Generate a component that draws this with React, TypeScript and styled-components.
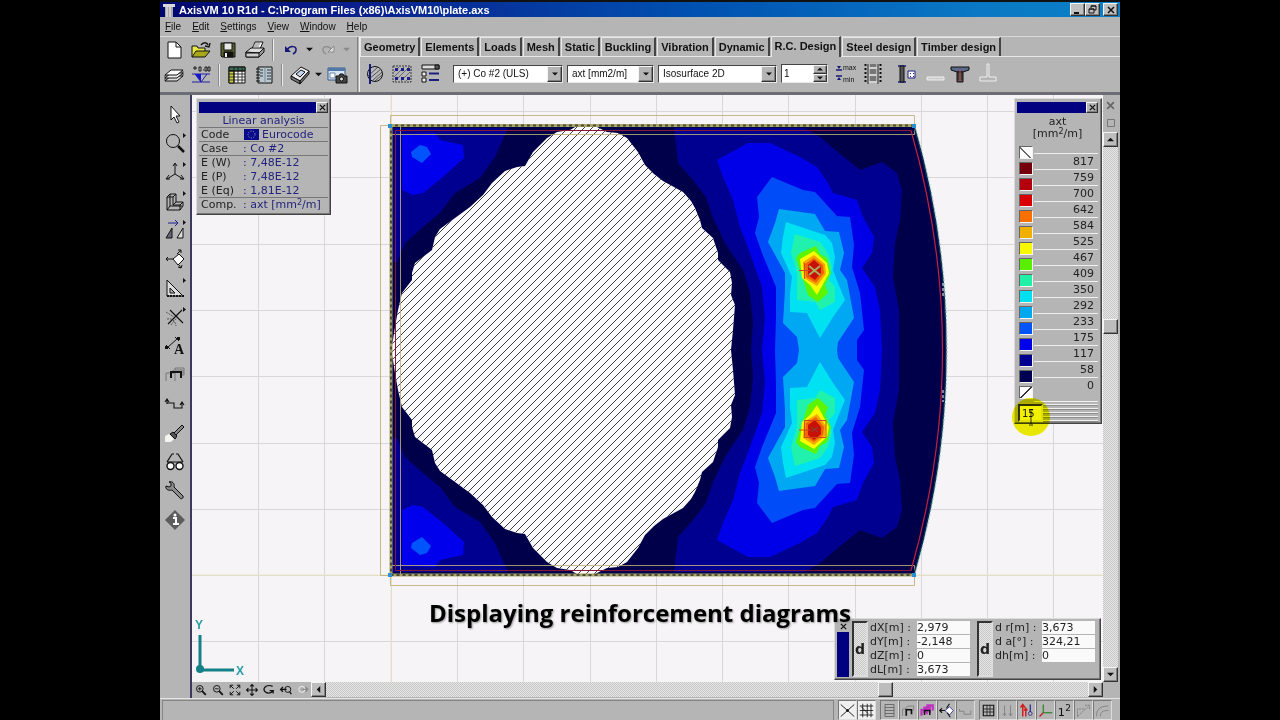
import React from 'react';
import styled, { createGlobalStyle, css } from 'styled-components';

const GREY = '#b5b5b5';
const NAVY = '#000080';
const UI = '"Liberation Sans", Arial, sans-serif';
const WIDE = '"DejaVu Sans", Verdana, sans-serif';

const Global = createGlobalStyle`
  * { box-sizing: border-box; }
  body { margin: 0; background: #000; font-family: ${UI}; font-size: 10px; color: #111; }
  button, input, select { font: inherit; color: inherit; margin: 0; padding: 0; border: 0; border-radius: 0; background: none; }
  svg { display: block; }
`;

const raised = css`
  border: 1px solid;
  border-color: #f4f4f4 #333 #333 #f4f4f4;
  box-shadow: inset -1px -1px 0 #808080;
`;
const sunken = css`
  border: 1px solid;
  border-color: #555 #f0f0f0 #f0f0f0 #555;
`;

const Stage = styled.div`
  display: flex;
  min-height: 100vh;
  padding: 0 12.5%;
  background: #000;
`;
const Shell = styled.div`
  position: relative;
  display: flex;
  flex-direction: column;
  flex: 1;
  min-width: 0;
  background: ${GREY};
`;

/* ---------- title bar and menu ---------- */
const TitleBar = styled.header`
  display: flex;
  align-items: center;
  height: 17px;
  padding: 0 2px 0 3px;
  border-top: 2px solid #111;
  background: linear-gradient(90deg, #00086e 0%, #0a1f8c 20%, #0050b0 55%, #0a78c4 85%, #0a80c8 100%);
  color: #fff;
`;
const Title = styled.h1`
  flex: 1;
  margin: 0 0 0 4px;
  font-size: 11px;
  line-height: 14px;
  font-weight: bold;
  white-space: nowrap;
`;
const CaptionButton = styled.button<{ $apart?: boolean }>`
  display: grid;
  place-items: center;
  width: 15px;
  height: 13px;
  margin-left: ${p => (p.$apart ? 3 : 0)}px;
  background: #c0c0c0;
  ${raised}
`;
const MenuBar = styled.nav`
  display: flex;
  gap: 11px;
  height: 20px;
  padding: 0 5px;
  align-items: center;
  border-bottom: 1px solid #d8d8d8;
`;
const MenuItem = styled.button`
  line-height: 16px;
  &::first-letter { text-decoration: underline; }
`;

/* ---------- toolbars ---------- */
const Toolbars = styled.div`
  display: flex;
  height: 58px;
  border-bottom: 3px solid #6c6c74;
`;
const ToolGroup = styled.div`
  padding: 0 6px 0 0;
  border-right: 1px solid #808080;
`;
const ToolRow = styled.div`
  display: flex;
  align-items: center;
  height: 25px;
`;
const ToolButton = styled.button<{ $w?: number }>`
  display: grid;
  place-items: center;
  flex: none;
  width: ${p => p.$w ?? 27}px;
  height: 25px;
`;
const Separator = styled.span`
  width: 2px;
  height: 22px;
  margin: 0 3px 0 4px;
  border-left: 1px solid #8a8a8a;
  border-right: 1px solid #ececec;
`;
const Ribbon = styled.div`
  display: flex;
  flex-direction: column;
  flex: 1;
  min-width: 0;
  margin-left: 1px;
  border-left: 1px solid #eee;
`;
const TabRow = styled.div`
  display: flex;
  gap: 1px;
  align-items: flex-end;
  height: 20px;
  border-bottom: 1px solid #e8e8e8;
`;
const Tab = styled.button<{ $on?: boolean }>`
  height: ${p => (p.$on ? 21 : 19)}px;
  padding: 0 3px ${p => (p.$on ? 3 : 0)}px;
  border-style: solid;
  border-width: 1px 2px 0 1px;
  border-color: #e8e8e8 #444 #e8e8e8 #e8e8e8;
  margin-bottom: ${p => (p.$on ? -1 : 0)}px;
  background: ${GREY};
  font-size: 11px;
  line-height: 16px;
  font-weight: bold;
  white-space: nowrap;
`;
const ControlRow = styled.div`
  display: flex;
  align-items: center;
  height: 33px;
`;
const ViewTools = styled.div`
  display: flex;
  margin-right: 9px;
`;
const Combo = styled.label<{ $w: number }>`
  display: flex;
  width: ${p => p.$w}px;
  height: 18px;
  margin-right: 4px;
  background: #fff;
  border: 1px solid;
  border-color: #444 #e8e8e8 #e8e8e8 #444;
`;
const ComboSelect = styled.select`
  flex: 1;
  min-width: 0;
  padding-left: 4px;
  appearance: none;
  outline: none;
`;
const ComboArrow = styled.span`
  display: grid;
  place-items: center;
  width: 15px;
  background: ${GREY};
  pointer-events: none;
  ${raised}
`;
const Spinner = styled.div`
  display: flex;
  width: 47px;
  height: 19px;
  margin-right: 6px;
  background: #fff;
  border: 1px solid;
  border-color: #444 #e8e8e8 #e8e8e8 #444;
`;
const SpinnerInput = styled.input`
  width: 31px;
  padding-left: 2px;
`;
const SpinnerButtons = styled.div`
  display: grid;
  grid-template-rows: 1fr 1fr;
  width: 14px;
`;
const SpinButton = styled.button`
  display: grid;
  place-items: center;
  background: ${GREY};
  ${raised}
`;

/* ---------- work area ---------- */
const Main = styled.main`
  display: flex;
  flex: 1;
  min-height: 0;
`;
const SideBar = styled.aside`
  display: flex;
  flex-direction: column;
  align-items: center;
  width: 32px;
  padding: 4px 0 0;
  border-right: 2px solid #3a3a5c;
`;
const SideButton = styled.button`
  display: grid;
  place-items: center;
  width: 28px;
  height: 29px;
`;
const Center = styled.section`
  display: flex;
  flex-direction: column;
  flex: 1;
  min-width: 0;
`;
const Canvas = styled.div`
  position: relative;
  flex: 1;
  min-height: 500px;
  background: #f6f4f6;
  overflow: hidden;
`;
const Plot = styled.svg`
  position: absolute;
  inset: 0;
  width: 100%;
  height: 100%;
`;
const AxisMark = styled.svg`
  position: absolute;
  left: 0;
  bottom: 0;
`;
const track = css`
  background: repeating-conic-gradient(#e6e6e6 0 25%, #c6c6c6 0 50%) 0 0 / 2px 2px;
`;
const ScrollButton = styled.button`
  display: grid;
  place-items: center;
  flex: none;
  width: 15px;
  height: 15px;
  background: #bdbdbd;
  ${raised}
`;
const BottomBar = styled.div`
  display: flex;
  height: 16px;
  padding-bottom: 1px;
`;
const ZoomButton = styled.button`
  display: grid;
  place-items: center;
  flex: none;
  width: 17px;
  height: 15px;
`;
const Track = styled.div<{ $dir: 'row' | 'column' }>`
  display: flex;
  flex: 1;
  flex-direction: ${p => p.$dir};
  ${track}
`;
const Spacer = styled.span<{ $grow: number }>`
  flex: ${p => p.$grow} 1 0;
`;
const RightBar = styled.div`
  display: flex;
  flex-direction: column;
  width: 17px;
  padding: 1px 2px 16px 0;
`;
const PinButton = styled.button`
  display: grid;
  place-items: center;
  width: 15px;
  height: 18px;
`;

/* ---------- floating panels ---------- */
const panel = css`
  position: absolute;
  background: ${GREY};
  border: 1px solid;
  border-color: #dcdcdc #444 #444 #dcdcdc;
  box-shadow: inset -1px -1px 0 #777;
  font-family: ${WIDE};
  font-size: 11px;
  color: #222;
`;
const PanelBar = styled.div`
  display: flex;
  justify-content: flex-end;
  height: 11px;
  background: ${NAVY};
`;
const PanelClose = styled.button`
  display: grid;
  place-items: center;
  width: 12px;
  height: 11px;
  background: ${GREY};
  ${raised}
`;
const InfoPanel = styled.section`
  ${panel}
  left: 4px;
  top: 3px;
  width: 135px;
  padding: 3px 2px 2px;
`;
const InfoTable = styled.table`
  width: 100%;
  margin-top: 1px;
  border-collapse: collapse;
  table-layout: fixed;
  caption { color: #24247c; height: 13px; line-height: 13px; }
`;
const InfoRow = styled.tr<{ $rule?: boolean }>`
  height: 14px;
  line-height: 13px;
  border-top: ${p => (p.$rule ? '1px solid #777' : '0')};
  th { width: 44px; padding: 0 0 0 2px; font-weight: normal; text-align: left; white-space: nowrap; }
  td { padding: 0; color: #24247c; white-space: nowrap; }
`;
const Flag = styled.svg`
  display: inline-block;
  vertical-align: top;
  margin: 1px 3px 0 1px;
`;
const Sup = styled.sup`
  font-size: 8px;
  line-height: 0;
  vertical-align: 3px;
`;
const LegendPanel = styled.section`
  ${panel}
  right: 1px;
  top: 3px;
  width: 88px;
  padding: 3px 3px 1px 2px;
`;
const LegendTitle = styled.h2`
  display: flex;
  flex-direction: column;
  margin: 3px 0 6px;
  font-size: 11px;
  line-height: 12px;
  font-weight: normal;
  text-align: center;
`;
const LegendBody = styled.div`
  display: flex;
`;
const SwatchList = styled.div`
  display: flex;
  flex-direction: column;
  padding-left: 2px;
  width: 17px;
`;
const Swatch = styled.span<{ $c: string }>`
  width: 14px;
  height: 13px;
  margin-bottom: 3px;
  border: 1px solid;
  border-color: #666 #f4f4f4 #f4f4f4 #666;
  background: ${p => p.$c};
`;
const ValueList = styled.ol`
  flex: 1;
  margin: 7px 0 0;
  padding: 0;
  list-style: none;
  border-bottom: 1px solid #f0f0f0;
`;
const Value = styled.li`
  height: 16px;
  padding-right: 4px;
  border-top: 1px solid #f0f0f0;
  line-height: 15px;
  text-align: right;
`;
const LegendFoot = styled.div`
  display: flex;
  height: 18px;
  margin-top: 2px;
  padding-left: 1px;
`;
const CountInput = styled.input`
  width: 25px;
  height: 18px;
  padding-left: 2px;
  font-size: 10px;
  background: #fff;
  border: 2px solid;
  border-color: #333 #eee #eee #333;
`;
const Stripes = styled.span`
  flex: 1;
  background: repeating-linear-gradient(#f0f0f0 0 1px, #8c8c8c 1px 2px, ${GREY} 2px 4px);
`;
const ClickHalo = styled.svg`
  position: absolute;
  left: -4px;
  bottom: -14px;
  pointer-events: none;
  mix-blend-mode: multiply;
`;
const CoordPanel = styled.section`
  ${panel}
  right: 2px;
  bottom: 2px;
  display: flex;
  width: 267px;
  height: 62px;
  padding: 2px 3px 2px 2px;
`;
const CoordGrip = styled.div`
  display: flex;
  flex-direction: column;
  flex: none;
  width: 12px;
  margin-right: 3px;
`;
const GripClose = styled.button`
  display: grid;
  place-items: center;
  height: 11px;
`;
const GripBar = styled.span`
  flex: 1;
  background: ${NAVY};
`;
const DeltaButton = styled.button`
  flex: none;
  width: 16px;
  margin-right: 2px;
  font-size: 14px;
  font-weight: bold;
  ${track}
  border: 2px solid;
  border-color: #333 #ddd #ddd #333;
`;
const CoordGrid = styled.div`
  display: grid;
  flex: none;
  grid-template-columns: 47px 53px;
  grid-auto-rows: 14px;
  margin-right: 7px;
  &:last-child { margin-right: 0; }
`;
const CoordLabel = styled.label`
  line-height: 14px;
  white-space: pre;
`;
const CoordInput = styled.input`
  width: 53px;
  height: 13px;
  background: #fafafa;
`;
const Caption = styled.p`
  position: absolute;
  left: 0;
  right: 0;
  bottom: 92px;
  margin: 0;
  font-family: "Open Sans", "Noto Sans", sans-serif;
  font-size: 24px;
  line-height: 30px;
  font-weight: bold;
  text-align: center;
  color: #000;
  text-shadow: 1px 1px 2px #999;
  pointer-events: none;
`;

/* ---------- status bar ---------- */
const StatusBar = styled.footer`
  display: flex;
  height: 22px;
  padding: 1px 8px 0 2px;
  border-top: 1px solid #e4e4e4;
`;
const StatusText = styled.div`
  flex: 1;
  border: 1px solid #858585;
  border-bottom: 0;
`;
const StatusGroup = styled.div`
  display: flex;
  margin-left: 4px;
`;
const StatusButton = styled.button<{ $on?: boolean }>`
  display: grid;
  place-items: center;
  width: 19px;
  height: 20px;
  ${sunken}
  border-color: #777 #ddd #ddd #777;
  background: ${p => (p.$on ? '#f0f0f0' : GREY)};
`;

/* ---------- icons ---------- */
type IconProps = { size?: number; children: React.ReactNode };
const Icon = ({ size = 20, children }: IconProps) => (
  <svg width={size} height={size} viewBox="0 0 20 20" fill="none" stroke="#111" strokeWidth="1" overflow="visible" aria-hidden="true">
    {children}
  </svg>
);
const Caret = ({ dir = 'down', color = '#111', w = 7 }: { dir?: string; color?: string; w?: number }) => {
  const d: Record<string, string> = {
    down: 'M0 2h8L4 6z', up: 'M0 6h8L4 2z', left: 'M6 0v8L2 4z', right: 'M2 0v8l4-4z',
  };
  return <svg width={w} height={w} viewBox="0 0 8 8" aria-hidden="true"><path d={d[dir]} fill={color} /></svg>;
};
const Cross = ({ s = 8, c = '#111' }: { s?: number; c?: string }) => (
  <svg width={s} height={s} viewBox="0 0 8 8" aria-hidden="true"><path d="M1 1l6 6M7 1L1 7" stroke={c} strokeWidth="1.5" /></svg>
);
const Flyout = <path d="M18 0v5l3-2.5z" fill="#111" stroke="none" />;

const tool: Record<string, React.ReactNode> = {
  New: <><path d="M4 2h8l5 5v11H4z" fill="#fff" /><path d="M12 2v5h5" /></>,
  Open: <><path d="M1 17V6h5l1 2h7v3" fill="#e8e84a" /><path d="M1 17l4-6h14l-5 6z" fill="#a8a818" /><path d="M10 5c2-3 6-3 7 0M14 6l4 1 1-4" strokeWidth="1.4" /></>,
  Save: <><path d="M3 3h14v14H4l-1-1z" fill="#56602c" /><path d="M6 3h8v7H6z" fill="#e8e8e8" /><path d="M6 12h9v5H6z" fill="#111" /><path d="M7 13h2v4H7z" fill="#eee" stroke="none" /></>,
  Print: <><path d="M7 9l3-7h8l-3 7z" fill="#fff" /><path d="M1 12l5-4h13l-4 5H1z" fill="#ddd" /><path d="M1 12v5h13l5-5V8l-5 5z" fill="#999" /><path d="M1 13h13v4H1z" fill="#ccc" /><path d="M9 4h6M8 6h6" stroke="#777" /></>,
  Undo: <><path d="M6 10c3-5 10-4 9 0 0 2-1 3-3 4" stroke="#18187a" strokeWidth="1.5" /><path d="M4 6v6h6z" fill="#18187a" stroke="none" /></>,
  Redo: <><path d="M14 10c-3-5-10-4-9 0 0 2 1 3 3 4" stroke="#8c8c8c" strokeWidth="1.3" /><path d="M16 6v6h-6z" fill="#ddd" stroke="#8c8c8c" /></>,
  Layers: <><path d="M1 16l6-5h12l-6 5z" fill="#ddd" /><path d="M1 13l6-5h12l-6 5z" fill="#eee" /><path d="M1 10l6-5h12l-6 5z" fill="#fff" /><path d="M1 10v6M19 6v5" strokeWidth=".7" /></>,
  Level: <><path d="M1 9h18M4 9l6 8 6-8M1 17h18" stroke="#2020a0" /><path d="M10 9v8L4 9z" fill="#1414d0" stroke="none" /><path d="M2 3h4M4 1v4M8 2h2v4H8zM12 5h1M14 2h2v4h-2zM17 2h2v4h-2z" strokeWidth=".9" /></>,
  Table: <><path d="M2 2h16v16H2z" fill="#fff" /><path d="M2 2h16v4H2z" fill="#3c6c54" /><path d="M2 6h5v12H2z" fill="#c8d040" /><path d="M2 6h16M2 9h16M2 12h16M2 15h16M7 2v16M11 2v16M15 2v16" strokeWidth=".8" /></>,
  Report: <><path d="M4 2h14v16H4z" fill="#b8c8cc" /><path d="M11 2v16" stroke="#789" /><path d="M6 5h3M6 8h3M6 11h3M13 5h4M13 8h4M13 11h4M13 14h4" stroke="#334" /><path d="M2 4h4M2 7h4M2 10h4M2 13h4M2 16h4" /></>,
  Snapshot: <><path d="M1 11L11 2l8 4-9 10z" fill="#eee" /><path d="M1 11v3l9 5v-3zM10 16v3l9-10V6z" fill="#777" /><path d="M6 9l5-4 4 2-5 5z" fill="#c4d4ec" /></>,
  Gallery: <><path d="M1 3h17v12H1z" fill="#d8e4f0" stroke="#345a8a" /><path d="M1 3h17v3H1z" fill="#5078a8" stroke="none" /><path d="M3 8h5v5H3z" fill="#fff" stroke="#345a8a" strokeWidth=".7" /><path d="M9 11h3l1-2h3l1 2h3v7H9z" fill="#444" /><circle cx="14.500" cy="14" r="2" fill="#ddd" /></>,
};
const control: Record<string, React.ReactNode> = {
  Section: <><circle cx="11" cy="10" r="7.500" fill="#bcbcbc" /><path d="M4 12l10-9M5 15L17 5M8 17l10-9M11 17l7-6" stroke="#444" strokeWidth=".9" /><path d="M6 0v20" stroke="#18187a" strokeWidth="2" /></>,
  Rebar: <><path d="M1 2h18v16H1z" stroke="#333" strokeDasharray="2 1" /><path d="M2 8l5-5M2 13L12 3M3 17L17 3M9 17l9-9M14 17l4-4" stroke="#555" strokeWidth=".8" /><path d="M3 4h3v3H3zM9 4h3v3H9zM15 4h3v3h-3zM3 13h3v3H3zM9 13h3v3H9zM15 13h3v3h-3z" fill="#1c1c90" stroke="none" /></>,
  Options: <><path d="M2 1h17v4H2z" fill="#ddd" /><path d="M15 1h4v4h-4z" fill="#555" /><path d="M2 8h4v4H2zM2 14h4v4H2z" fill="#eee" /><path d="M9 9.500h10M9 16h10" stroke="#1c1c80" strokeWidth="2" /></>,
};

const column: [string, React.ReactNode][] = [
  ['Select', <path d="M6 2v14l3-3 3 6 2-1-3-6h4z" fill="#fff" />],
  ['Zoom', <><circle cx="8" cy="8" r="6.500" /><path d="M13 13l6 6" strokeWidth="2.500" />{Flyout}</>],
  ['Views', <><path d="M10 12V2M10 12l-8 5M10 12l8 5M8 4l2-3 2 3M4 13l-3 4h4M16 13l3 4h-4" />{Flyout}</>],
  ['Work plane', <><path d="M2 6l3-3h6v8h7v4l-3 4H2z" /><path d="M2 6h6v8h7v5M8 6l3-3M8 14l3-3M15 14l3-3M5 3v12l-3 4M5 15h12" />{Flyout}</>],
  ['Transform', <><path d="M3 3h10M10 0l3 3-3 3" stroke="#1c1c90" /><path d="M1 18h6V8z" fill="#667" /><path d="M12 18h6V8z" fill="#ddd" />{Flyout}</>],
  ['Planes', <><path d="M8 10l6-5 5 5-6 6z" fill="#fff" /><path d="M8 10H1M3 8l-2 2 2 2M12 5l4-4M14 16l2 3M13 1h3v3M17 16l-1 3-3-1" /></>],
  ['Guidelines', <><path d="M2 2v16h16z" fill="#ddd" /><path d="M5 10v5h5z" fill={GREY} /><path d="M2 18h17" strokeDasharray="2 1" strokeWidth="2" />{Flyout}</>],
  ['Intersect', <><path d="M5 3l13 13M17 3L3 17" strokeWidth="1.200" /><path d="M1 5l8 5M6 18l7-9M2 12c6-1 8 2 9 7" stroke="#555" strokeDasharray="2 1" />{Flyout}</>],
  ['Dimension', <><path d="M2 12L13 2M1 9l4 4M10 1l4 4" /><path d="M12 1h3v3h-3zM0 10h3v3H0z" fill="#111" stroke="none" /><text x="9" y="18" fontFamily="Liberation Serif, serif" fontSize="14" fontWeight="bold" fill="#111" stroke="none">A</text></>],
  ['Copy', <><path d="M1 16V8h9v8M5 8l4-3h9v6M10 5V3h9v7" stroke="#777" /><path d="M6 13V7h10v6" strokeWidth="2" /></>],
  ['Path', <path d="M2 10V6M0 8l2-3 2 3M2 9h7v5h8V9M15 11l2-3 2 3" strokeWidth="1.100" />],
  ['Brush', <><path d="M8 11l9-9 2 2-9 9z" fill="#888" /><path d="M5 11l5 5 2-3-4-4z" fill="#555" /><path d="M0 13l4-2 5 5-3 3H0z" fill="#f4f4f0" stroke="none" /></>],
  ['Display', <><path d="M2 10L7 2h2M18 10l-5-8h-2M2 10h16" strokeWidth="1.200" /><circle cx="5.500" cy="14" r="3.500" fill="#fff" strokeWidth="1.400" /><circle cx="14.500" cy="14" r="3.500" fill="#fff" strokeWidth="1.400" /></>],
  ['Service', <path d="M1 5l3 1 2-1V2L4 1c3-1 6 1 5 5l9 9c1 2-2 4-3 2L7 9C3 10 0 8 1 5z" fill="#8c8c8c" />],
  ['Information', <><path d="M10 0l10 10-10 10L0 10z" fill="#5c5c5c" stroke="none" /><path d="M8 8h3v6M8 14h6" stroke="#fff" strokeWidth="2" /><circle cx="10" cy="5" r="1.500" fill="#fff" stroke="none" /></>],
];

const design: [string, number, React.ReactNode][] = [
  ['Film strip', 30, <><path d="M2.500 0v20M17.500 0v20" strokeDasharray="2 2" strokeWidth="2" /><path d="M5 0v20M15 0v20" strokeWidth=".8" /><path d="M7 5h6v5H7zM7 12h6v5H7zM7 0h6v3H7z" fill="#777" stroke="none" /><path d="M6 4h8M6 11h8M6 18h8" stroke="#eee" /></>],
  ['Column check', 38, <><path d="M1 2h8M1 18h8" stroke="#1c1c80" strokeWidth="1.500" /><path d="M3 2h4v16H3z" fill="#555" /><path d="M11 7h7v7h-7z" fill="#fff" stroke="#1c1c80" /><path d="M13 9h1v1h-1zM16 9h1v1h-1zM13 12h1v1h-1zM16 12h1v1h-1z" fill="#1c1c80" stroke="none" /></>],
  ['Slab', 20, <path d="M1 13h17v3H1z" fill="#ccc" stroke="#eee" />],
  ['Punching', 28, <><path d="M1 3h18v3l-6 2H7L1 6z" fill="#5a6a8a" /><path d="M7 8h6v10H7z" fill="#555" /><path d="M10 5v12" stroke="#c04040" /><path d="M8 8v8M12 8v8" stroke="#222" /></>],
  ['Footing', 28, <path d="M9 0h2v13h7v4H2v-4h7z" fill={GREY} stroke="#eee" />],
];

const zoomTools: [string, React.ReactNode][] = [
  ['Zoom in', <><circle cx="8" cy="8" r="5.500" strokeWidth="1.600" /><path d="M12 12l6 6" strokeWidth="3" /><path d="M5 8h6M8 5v6" strokeWidth="1.500" /></>],
  ['Zoom out', <><circle cx="8" cy="8" r="5.500" strokeWidth="1.600" /><path d="M12 12l6 6" strokeWidth="3" /><path d="M5 8h6" strokeWidth="1.500" /></>],
  ['Zoom to fit', <path d="M8 8L2 2M2 7V2h5M12 8l6-6M13 2h5v5M8 12l-6 6M2 13v5h5M12 12l6 6M18 13v5h-5" strokeWidth="1.600" />],
  ['Pan', <path d="M10 1v18M1 10h18M7 4l3-3 3 3M7 16l3 3 3-3M4 7l-3 3 3 3M16 7l3 3-3 3" strokeWidth="1.800" />],
  ['Rotate', <path d="M16 4C8 0 0 5 2 11c3 6 12 5 15 0h-6M17 11v5" strokeWidth="2" />],
  ['Previous view', <><circle cx="13" cy="9" r="5" strokeWidth="1.600" /><path d="M16 13l3 4M1 9h10M5 5L1 9l4 4" strokeWidth="2.200" /></>],
  ['Next view', <><circle cx="8" cy="9" r="5" stroke="#eee" strokeWidth="1.600" /><path d="M8 9h10M14 5l4 4-4 4" stroke="#888" strokeWidth="2" /></>],
];

const statusGroups: [string, React.ReactNode, boolean?][][] = [
  [
    ['Cursor snap', <path d="M1 2l18 16M19 2L1 18M8 10h4M10 8v4" strokeWidth="1.200" />, true],
    ['Grid snap', <path d="M5 1v18M11 1v18M16 1v18M1 4h18M1 10h18M1 16h18M3 5l9 9" strokeWidth="1.100" />, true],
  ],
  [
    ['Table', <path d="M4 2h12v16H4zM4 6h12M4 10h12M4 14h12" stroke="#555" />],
    ['Copy', <><path d="M2 17V8h8M6 7l3-3h8v6" stroke="#777" /><path d="M7 17V9h7v6" strokeWidth="2.200" /></>],
    ['Parts', <><path d="M2 17V9h7v6M6 13V6h7v7M10 9V3h7v7" stroke="#c030c0" strokeWidth="3" /><path d="M6 16v-6h7v6" strokeWidth="2" /></>],
    ['Planes', <><path d="M8 10l6-5 5 5-5 6z" fill="#fff" stroke="#1c1c90" /><path d="M1 10h7M4 7l-3 3 3 3M10 7l4-6M11 13l4 6" strokeWidth="1.500" /></>],
    ['Path', <path d="M2 8v3h6v4h9v-5" stroke="#777" />],
  ],
  [
    ['Grid', <><path d="M3 3h14v14H3z" strokeWidth="1.500" /><path d="M3 8h14M3 12h14M8 3v14M12 3v14" /></>],
    ['Loads', <path d="M6 3v14M4 14l2 3 2-3M14 3v14M12 14l2 3 2-3" stroke="#777" />],
    ['Symbols', <><path d="M5 18V3M2 6l3-4 3 4M9 18V8M7 10l2-3 2 3" stroke="#d02020" strokeWidth="2" /><path d="M15 2v10" stroke="#1c1c90" strokeWidth="1.500" /><circle cx="15" cy="14" r="2.500" stroke="#1c1c90" /></>],
    ['Local axes', <><path d="M7 13V2" stroke="#208020" strokeWidth="1.500" /><path d="M7 13l-5 5" stroke="#c02020" strokeWidth="2" /><path d="M7 13h12" stroke="#208020" strokeWidth="1.500" /></>],
    ['Numbering', <><text x="1" y="17" fontSize="15" fontFamily={WIDE} fill="#111" stroke="none">1</text><text x="11" y="11" fontSize="12" fontFamily={WIDE} fill="#111" stroke="none">2</text></>],
    ['Guide', <path d="M2 18V8h10M2 18L18 3M12 3h6v6" stroke="#777" strokeDasharray="3 1" />],
    ['Arc', <path d="M2 18c0-9 4-14 16-14M7 18c0-6 3-8 11-8" stroke="#777" />],
  ],
];

/* ---------- result plot ---------- */
type Pt = [number, number];
const AXIS_SUM = 700;
const flip = (pts: Pt[]): Pt[] => pts.map(([x, y]): Pt => [x, AXIS_SUM - y]);
const str = (pts: Pt[]) => pts.map(p => p.join(',')).join(' ');
const whole = (pts: Pt[]) => str([...pts, ...flip(pts).reverse()]);

/* Upper halves of the bands that cross the axis of symmetry. */
const bands: [string, Pt[]][] = [
  ['#000090', [[751, 350], [753, 323], [750, 293], [743, 270], [725, 243], [713, 218], [706, 197], [693, 180], [678, 163], [674, 128], [805, 128], [820, 137], [833, 148], [860, 170], [871, 166], [882, 162], [897, 173], [902, 190], [900, 220], [895, 243], [893, 277], [899, 310], [899, 350]]],
  ['#0000e8', [[762, 350], [765, 317], [762, 287], [750, 253], [740, 227], [733, 200], [723, 177], [717, 160], [748, 143], [770, 143], [800, 157], [817, 167], [828, 183], [833, 193], [857, 200], [863, 217], [874, 237], [872, 253], [862, 268], [875, 287], [880, 310], [882, 350]]],
  ['#004cf8', [[775, 350], [776, 317], [776, 287], [762, 253], [755, 233], [759, 217], [757, 197], [772, 177], [803, 190], [815, 192], [837, 216], [850, 217], [854, 245], [852, 267], [860, 293], [864, 330], [857, 340], [857, 350]]],
  ['#00a8f4', [[799, 350], [797, 337], [783, 323], [785, 290], [785, 273], [768, 242], [775, 223], [779, 209], [815, 214], [825, 231], [839, 232], [844, 253], [840, 270], [847, 280], [854, 318], [838, 342], [837, 350]]],
];
/* Closed spots around the two supports and in the corners; each has a twin below the axis. */
const islands: [string, Pt[]][] = [
  ['#000090', [[393, 128], [508, 128], [495, 157], [480, 178], [455, 193], [440, 213], [423, 227], [405, 243], [397, 262], [393, 262]]],
  ['#0000ec', [[402, 134], [435, 133], [440, 140], [463, 145], [464, 158], [443, 177], [423, 193], [413, 195], [402, 190]]],
  ['#0054fc', [[411, 152], [420, 145], [427, 147], [431, 154], [422, 163], [412, 157]]],
  ['#00e2f2', [[786, 222], [825, 235], [832, 243], [835, 257], [833, 270], [838, 283], [845, 300], [833, 317], [820, 338], [812, 323], [807, 313], [790, 312], [790, 293], [792, 277], [781, 253], [783, 237]]],
  ['#20f2ae', [[795, 234], [820, 242], [828, 253], [832, 267], [829, 280], [835, 287], [835, 302], [820, 310], [815, 302], [797, 300], [797, 273], [791, 253]]],
  ['#5cf400', [[816, 246], [820, 254], [827, 258], [831, 273], [825, 285], [828, 293], [818, 302], [808, 295], [803, 279], [796, 258], [800, 253]]],
  ['#fafa00', [[814, 251], [827, 263], [829, 273], [822, 286], [817, 295], [810, 285], [802, 278], [800, 259]]],
  ['#f4a800', [[814, 255], [825, 264], [826, 274], [817, 286], [804, 278], [803, 262]]],
  ['#f06400', [[814, 258], [823, 265], [824, 273], [816, 283], [806, 277], [805, 264]]],
  ['#c81008', [[814, 260], [821, 266], [821, 273], [815, 280], [808, 275], [808, 265]]],
];
const unreinforced: Pt[] = [
  [391, 350], [393, 340], [395, 327], [398, 310], [402, 293], [412, 280], [412, 273], [415, 263], [432, 250], [435, 237], [440, 229], [455, 218], [470, 207], [483, 195], [492, 183], [505, 171], [517, 167], [525, 166], [533, 152], [547, 138], [557, 132], [570, 130], [577, 126], [595, 126], [607, 132], [618, 133], [627, 138], [638, 152], [645, 165], [654, 174], [663, 181], [683, 192], [691, 201], [695, 208], [700, 220], [702, 228], [713, 238], [718, 253], [718, 260], [730, 272], [732, 283], [731, 295], [735, 305], [733, 330], [731, 350],
];
const gridX = [258, 324, 391, 457, 523, 590, 656, 722, 788, 855, 921, 987, 1053];
const gridY = [111, 177, 244, 310, 376, 443, 509, 575, 641];

const ResultPlot = () => (
  <Plot viewBox="192 95 911 587" preserveAspectRatio="xMidYMid slice" role="img" aria-label="Top reinforcement isosurfaces">
    <defs>
      <pattern id="hatch" width="8" height="8" patternUnits="userSpaceOnUse">
        <path d="M-1 9L9 -1M-1 1L1 -1M7 9L9 7" stroke="#2c2c2c" strokeWidth="0.900" />
      </pattern>
    </defs>
    <g stroke="#d8d8da" shapeRendering="crispEdges">
      {gridX.map(x => <line key={x} x1={x} x2={x} y1="95" y2="682" />)}
      {gridY.map(y => <line key={y} x1="192" x2="1103" y1={y} y2={y} />)}
    </g>
    <path d="M391 95V682M192 575H1103" stroke="#eae6c0" />
    <path d="M391 126H914A800 800 0 0 1 914 574H391Z" fill="#00004a" />
    {islands.slice(0, 3).map(([c, p], i) => (
      <g key={i} fill={c}><polygon points={str(p)} /><polygon points={str(flip(p))} /></g>
    ))}
    {bands.map(([c, p], i) => <polygon key={i} points={whole(p)} fill={c} />)}
    {islands.slice(3).map(([c, p], i) => (
      <g key={i} fill={c}><polygon points={str(p)} /><polygon points={str(flip(p))} /></g>
    ))}
    <polygon points={whole(unreinforced)} fill="#fafafc" />
    <polygon points={whole(unreinforced)} fill="url(#hatch)" />
    <g fill="none">
      <path d="M390.500 115.500H914.500V134.500H390.500ZM390.500 565.500H914.500V585.500H390.500ZM380.500 125.500H400.500V575.500H380.500Z" stroke="#bfae78" strokeWidth="1" opacity=".85" />
      <path d="M911 130.500H395.500V570.500H911" stroke="#8c1838" />
      <path d="M911 130.500Q974 350 911 570.500" stroke="#c02438" strokeWidth="1.200" />
      <path d="M914 125.500H391V575H914" stroke="#a8a468" strokeWidth="3" />
      <path d="M914 125.500H391V575H914" stroke="#4c4c38" strokeWidth="2" strokeDasharray="3 3" />
      <path d="M914 126A800 800 0 0 1 914 574" stroke="#0c2c4c" strokeWidth="1.500" />
      <path d="M915 126A800 800 0 0 1 915 574" stroke="#7ac0c0" strokeWidth="1" strokeDasharray="2 2" />
      <path d="M943 283V296M943 390V402" stroke="#fff" strokeDasharray="3 2" />
      <path d="M804.500 263V279M799 270.500H810M804.500 420.500H826V437.500H804.500ZM799 430H810" stroke="#d04818" />
      <path d="M809 266l11 9M820 266l-11 9" stroke="#a8b060" strokeWidth="2" />
      <path d="M811 427l7 5M818 427l-7 5" stroke="#705040" />
    </g>
    <path d="M388 124h4v4h-4zM912 124h4v4h-4zM388 573h4v4h-4zM912 573h4v4h-4z" fill="#2c90d0" />
  </Plot>
);

const hatchA = 'linear-gradient(45deg, #fff 42%, #666 42% 52%, #fff 52%)';
const hatchB = 'linear-gradient(135deg, #fff 45%, #333 45% 55%, #fff 55%)';
const legendColors = [hatchA, '#74000c', '#b4000c', '#d80000', '#f87000', '#f0b000', '#f8f800', '#58f000', '#20f0a8', '#00e0f0', '#00a8f0', '#0054f8', '#0000ec', '#000090', '#000050', hatchB];
const legendValues = [817, 759, 700, 642, 584, 525, 467, 409, 350, 292, 233, 175, 117, 58, 0];
const tabs = ['Geometry', 'Elements', 'Loads', 'Mesh', 'Static', 'Buckling', 'Vibration', 'Dynamic', 'R.C. Design', 'Steel design', 'Timber design'];
const infoRows: [string, string, boolean][] = [
  ['Case', ': Co #2', true], ['E (W)', ': 7,48E-12', true], ['E (P)', ': 7,48E-12', false], ['E (Eq)', ': 1,81E-12', false],
];
const coordGroups: [string, string][][] = [
  [['dX[m] :', '2,979'], ['dY[m] :', '-2,148'], ['dZ[m] :', '0'], ['dL[m] :', '3,673']],
  [['d r[m] :', '3,673'], ['d a[°] :', '324,21'], ['dh[m] :', '0']],
];

const Tool = ({ name }: { name: string }) => (
  <ToolButton aria-label={name}><Icon>{tool[name]}</Icon></ToolButton>
);
const DropArrow = ({ name, off }: { name: string; off?: boolean }) => (
  <ToolButton $w={10} aria-label={name}><Caret color={off ? '#8a8a8a' : '#111'} /></ToolButton>
);
const Select = ({ name, value, width }: { name: string; value: string; width: number }) => (
  <Combo $w={width}>
    <ComboSelect aria-label={name} defaultValue={value}><option>{value}</option></ComboSelect>
    <ComboArrow><Caret w={6} /></ComboArrow>
  </Combo>
);

export default function App() {
  return (
    <Stage>
      <Global />
      <Shell>
        <TitleBar>
          <svg width="12" height="14" viewBox="0 0 12 14" aria-hidden="true">
            <path d="M0 1h12v3H0z" fill="#d8d8d8" /><path d="M2 4h8v10H2z" fill="#a8a8a8" /><path d="M4 4v10M7 4v10" stroke="#f4f4f4" />
          </svg>
          <Title>AxisVM 10 R1d - C:\Program Files (x86)\AxisVM10\plate.axs</Title>
          <CaptionButton aria-label="Minimize"><svg width="9" height="8"><path d="M1 7h5" stroke="#111" strokeWidth="2" /></svg></CaptionButton>
          <CaptionButton aria-label="Restore"><svg width="9" height="9" fill="none" stroke="#111"><path d="M3 3V1h5v4H6M1 4h5v4H1zM1 4h5M3 1h5" /></svg></CaptionButton>
          <CaptionButton $apart aria-label="Close"><Cross /></CaptionButton>
        </TitleBar>
        <MenuBar>
          {['File', 'Edit', 'Settings', 'View', 'Window', 'Help'].map(m => <MenuItem key={m}>{m}</MenuItem>)}
        </MenuBar>
        <Toolbars>
          <ToolGroup>
            <ToolRow>
              <Tool name="New" /><Tool name="Open" /><Tool name="Save" /><Tool name="Print" />
              <Separator />
              <Tool name="Undo" /><DropArrow name="Undo list" /><Tool name="Redo" /><DropArrow name="Redo list" off />
            </ToolRow>
            <ToolRow>
              <Tool name="Layers" /><Tool name="Level" />
              <Separator />
              <Tool name="Table" /><Tool name="Report" />
              <Separator />
              <Tool name="Snapshot" /><DropArrow name="Snapshot options" /><Tool name="Gallery" />
            </ToolRow>
          </ToolGroup>
          <Ribbon>
            <TabRow>
              {tabs.map(t => <Tab key={t} $on={t === 'R.C. Design'}>{t}</Tab>)}
            </TabRow>
            <ControlRow>
              <ViewTools>
                {Object.keys(control).map(n => (
                  <ToolButton key={n} $w={28} aria-label={n}><Icon>{control[n]}</Icon></ToolButton>
                ))}
              </ViewTools>
              <Select name="Load case" value="(+) Co #2 (ULS)" width={110} />
              <Select name="Component" value="axt [mm2/m]" width={87} />
              <Select name="Display mode" value="Isosurface 2D" width={119} />
              <Spinner>
                <SpinnerInput aria-label="Scale" defaultValue="1" />
                <SpinnerButtons>
                  <SpinButton aria-label="Increase"><Caret dir="up" w={6} /></SpinButton>
                  <SpinButton aria-label="Decrease"><Caret w={6} /></SpinButton>
                </SpinnerButtons>
              </Spinner>
              <ToolButton $w={24} aria-label="Minimum and maximum">
                <svg width="22" height="20" viewBox="0 0 22 20" aria-hidden="true">
                  <path d="M1 6h6M1 12h6" stroke="#18187a" strokeWidth="1.500" />
                  <path d="M2 2h4L4 5zM2 16h4l-2-3z" fill="#18187a" />
                  <text x="8" y="6" fontSize="7" fontFamily={UI} fill="#111">max</text>
                  <text x="8" y="18" fontSize="7" fontFamily={UI} fill="#111">min</text>
                </svg>
              </ToolButton>
              {design.map(([n, w, d]) => <ToolButton key={n} $w={w} aria-label={n}><Icon>{d}</Icon></ToolButton>)}
            </ControlRow>
          </Ribbon>
        </Toolbars>
        <Main>
          <SideBar>
            {column.map(([n, d]) => <SideButton key={n} aria-label={n}><Icon>{d}</Icon></SideButton>)}
          </SideBar>
          <Center>
            <Canvas>
              <ResultPlot />
              <AxisMark width="60" height="65" aria-hidden="true">
                <path d="M8 18V53H42" fill="none" stroke="#148088" strokeWidth="3" />
                <circle cx="8" cy="52" r="4" fill="#148088" />
                <text x="3" y="12" fontSize="12" fontWeight="bold" fontFamily={UI} fill="#2c9ca4">Y</text>
                <text x="44" y="58" fontSize="12" fontWeight="bold" fontFamily={UI} fill="#2c9ca4">X</text>
              </AxisMark>
              <InfoPanel>
                <PanelBar><PanelClose aria-label="Close information"><Cross s={7} /></PanelClose></PanelBar>
                <InfoTable>
                  <caption>Linear analysis</caption>
                  <tbody>
                    <InfoRow $rule>
                      <th scope="row">Code</th>
                      <td>
                        <Flag width="15" height="11" aria-hidden="true">
                          <path d="M0 0h15v11H0z" fill="#0a0a8c" />
                          <circle cx="7.500" cy="5.500" r="3.500" fill="none" stroke="#a8a8d0" strokeDasharray="1 1.500" />
                        </Flag>
                        Eurocode
                      </td>
                    </InfoRow>
                    {infoRows.map(([k, v, r]) => (
                      <InfoRow key={k} $rule={r}><th scope="row">{k}</th><td>{v}</td></InfoRow>
                    ))}
                    <InfoRow $rule><th scope="row">Comp.</th><td>: axt [mm<Sup>2</Sup>/m]</td></InfoRow>
                  </tbody>
                </InfoTable>
              </InfoPanel>
              <LegendPanel>
                <PanelBar><PanelClose aria-label="Close legend"><Cross s={7} /></PanelClose></PanelBar>
                <LegendTitle><span>axt</span><span>[mm<Sup>2</Sup>/m]</span></LegendTitle>
                <LegendBody>
                  <SwatchList>{legendColors.map((c, i) => <Swatch key={i} $c={c} />)}</SwatchList>
                  <ValueList>{legendValues.map(v => <Value key={v}>{v}</Value>)}</ValueList>
                </LegendBody>
                <LegendFoot>
                  <CountInput aria-label="Number of levels" defaultValue="15" />
                  <Stripes />
                </LegendFoot>
                <ClickHalo width="40" height="40" aria-hidden="true">
                  <circle cx="20" cy="20" r="19" fill="#f2f200" />
                  <path d="M20 14v13M18 13h4M18 28h4" stroke="#333" />
                </ClickHalo>
              </LegendPanel>
              <CoordPanel>
                <CoordGrip>
                  <GripClose aria-label="Close coordinates"><Cross s={7} /></GripClose>
                  <GripBar />
                </CoordGrip>
                {coordGroups.map((rows, g) => (
                  <React.Fragment key={g}>
                    <DeltaButton aria-label={g ? 'Relative polar coordinates' : 'Relative coordinates'}>d</DeltaButton>
                    <CoordGrid>
                      {rows.map(([k, v]) => (
                        <React.Fragment key={k}>
                          <CoordLabel htmlFor={k.slice(0, 3).replace(' ', '-')}>{k}</CoordLabel>
                          <CoordInput id={k.slice(0, 3).replace(' ', '-')} defaultValue={v} />
                        </React.Fragment>
                      ))}
                    </CoordGrid>
                  </React.Fragment>
                ))}
              </CoordPanel>
            </Canvas>
            <BottomBar>
              {zoomTools.map(([n, d]) => <ZoomButton key={n} aria-label={n}><Icon size={12}>{d}</Icon></ZoomButton>)}
              <ScrollButton aria-label="Scroll left"><Caret dir="left" /></ScrollButton>
              <Track $dir="row">
                <Spacer $grow={555} /><ScrollButton aria-label="Horizontal position" /><Spacer $grow={196} />
              </Track>
              <ScrollButton aria-label="Scroll right"><Caret dir="right" /></ScrollButton>
            </BottomBar>
          </Center>
          <RightBar>
            <PinButton aria-label="Close view"><Cross s={9} c="#666" /></PinButton>
            <PinButton aria-label="Maximize view"><svg width="8" height="8"><path d="M.5 .5h7v7h-7z" fill="none" stroke="#777" /></svg></PinButton>
            <ScrollButton aria-label="Scroll up"><Caret dir="up" /></ScrollButton>
            <Track $dir="column">
              <Spacer $grow={172} /><ScrollButton aria-label="Vertical position" /><Spacer $grow={332} />
            </Track>
            <ScrollButton aria-label="Scroll down"><Caret /></ScrollButton>
          </RightBar>
        </Main>
        <StatusBar>
          <StatusText />
          {statusGroups.map((group, g) => (
            <StatusGroup key={g}>
              {group.map(([n, d, on]) => <StatusButton key={n} $on={on} aria-label={n}><Icon size={15}>{d}</Icon></StatusButton>)}
            </StatusGroup>
          ))}
        </StatusBar>
        <Caption>Displaying reinforcement diagrams</Caption>
      </Shell>
    </Stage>
  );
}
